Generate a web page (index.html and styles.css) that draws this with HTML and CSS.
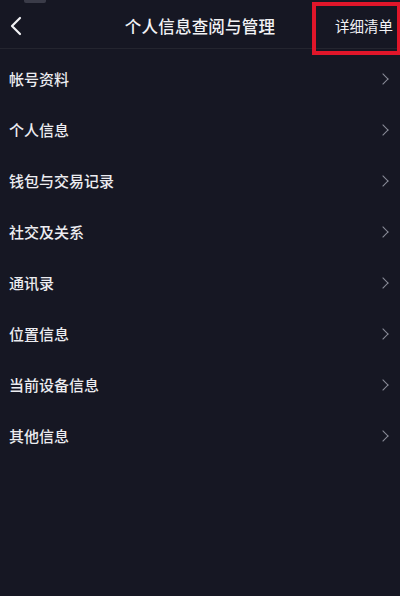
FILE: index.html
```html
<!DOCTYPE html>
<html>
<head>
  <meta charset="utf-8">
  <title>个人信息查阅与管理</title>
  <link rel="stylesheet" href="styles.css">
</head>
<body>
  <div class="page">
    <div class="status-ghost"></div>
    <div class="nav-bar">
      <div class="back">
        <svg width="14" height="20" viewBox="0 0 14 20">
          <path d="M11 2 L3 10 L11 18" fill="none" stroke="#f2f2f5" stroke-width="2.2" stroke-linecap="round" stroke-linejoin="round"/>
        </svg>
      </div>
      <div class="title">个人信息查阅与管理</div>
      <div class="detail">详细清单</div>
    </div>

    <ul class="menu">
      <li class="menu-item"><span>帐号资料</span><i class="arrow"></i></li>
      <li class="menu-item"><span>个人信息</span><i class="arrow"></i></li>
      <li class="menu-item"><span>钱包与交易记录</span><i class="arrow"></i></li>
      <li class="menu-item"><span>社交及关系</span><i class="arrow"></i></li>
      <li class="menu-item"><span>通讯录</span><i class="arrow"></i></li>
      <li class="menu-item"><span>位置信息</span><i class="arrow"></i></li>
      <li class="menu-item"><span>当前设备信息</span><i class="arrow"></i></li>
      <li class="menu-item"><span>其他信息</span><i class="arrow"></i></li>
    </ul>
  </div>
</body>
</html>
```

FILE: styles.css
```css
body {
  margin: 0;
  width: 400px;
  height: 596px;
  background-color: #161723;
  color: #ececf0;
  font-family: "Noto Sans CJK SC", "Noto Sans", sans-serif;
  overflow: hidden;
}

.page {
  position: relative;
  height: 596px;
}

/* leftover of the cropped status bar */
.status-ghost {
  position: absolute;
  top: 0;
  left: 24px;
  width: 22px;
  height: 3px;
  background: #3a3b48;
  border-radius: 0 0 2px 2px;
}

.nav-bar {
  position: relative;
  display: flex;
  align-items: center;
  height: 44px;
  padding-top: 4px;
  border-bottom: 1px solid #24252f;
}

.back {
  display: flex;
  align-items: center;
  padding-left: 9px;
  width: 30px;
}

.title {
  position: absolute;
  left: 0;
  right: 0;
  text-align: center;
  font-size: 16.5px;
  font-weight: 500;
  color: #f2f2f5;
  letter-spacing: 0.2px;
  pointer-events: none;
}

/* red highlight box drawn over the screenshot */
.detail {
  position: absolute;
  top: 2px;
  right: -1px;
  width: 77px;
  height: 38px;
  border: 4px solid #e0162a;
  display: flex;
  align-items: center;
  justify-content: flex-end;
  padding: 0 4px 7px 0;
  box-sizing: content-box;
  font-size: 14.5px;
  color: #f2f2f5;
}

.menu {
  list-style: none;
  margin: 0;
  padding: 4px 0 0;
}

.menu-item {
  display: flex;
  align-items: center;
  justify-content: space-between;
  height: 51px;
  padding: 0 9px 0 9px;
  font-size: 15px;
  font-weight: 500;
}

.arrow {
  width: 7px;
  height: 7px;
  border-top: 1.8px solid #8b8d99;
  border-right: 1.8px solid #8b8d99;
  transform: rotate(45deg);
  margin-right: 4px;
}
```
